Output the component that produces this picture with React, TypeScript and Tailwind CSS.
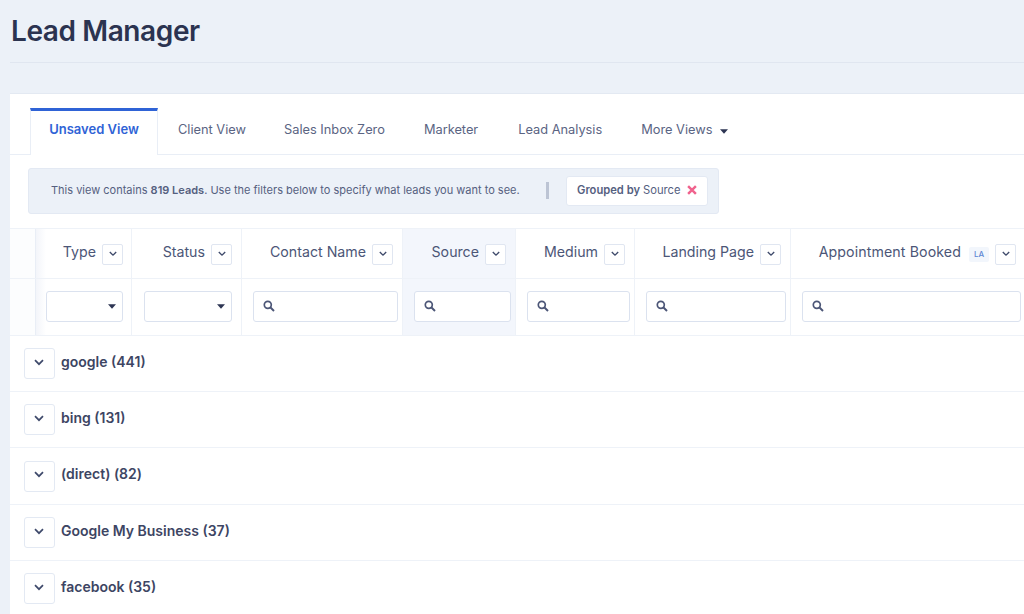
import React from "react";

const cols = [
  { w: "w-[96px]", label: "Type", kind: "select", pl: "pl-[10px]", pr: "pr-[8px]", hpr: "pr-[8px]" },
  { w: "w-[110px]", label: "Status", kind: "select", pl: "pl-[12px]", pr: "pr-[9px]", hpr: "pr-[9px]" },
  { w: "w-[161px]", label: "Contact Name", kind: "search", pl: "pl-[11px]", pr: "pr-[4px]", hpr: "pr-[9px]" },
  { w: "w-[113px]", label: "Source", kind: "search", pl: "pl-[11px]", pr: "pr-[4px]", hpr: "pr-[9px]", hi: true },
  { w: "w-[119px]", label: "Medium", kind: "search", pl: "pl-[11px]", pr: "pr-[4px]", hpr: "pr-[9px]" },
  { w: "w-[156px]", label: "Landing Page", kind: "search", pl: "pl-[11px]", pr: "pr-[4px]", hpr: "pr-[9px]" },
  { w: "w-[234px]", label: "Appointment Booked", kind: "search", pl: "pl-[11px]", pr: "pr-[3px]", hpr: "pr-[8px]", badge: true },
];

const groups = [
  { t: "google (441)", h: "h-[56px]" },
  { t: "bing (131)", h: "h-[56px]" },
  { t: "(direct) (82)", h: "h-[57px]" },
  { t: "Google My Business (37)", h: "h-[56px]" },
  { t: "facebook (35)", h: "h-[56px]" },
];

function Chevron({ size = 10 }: { size?: number }) {
  return (
    <svg width={size} height={size * 0.7} viewBox="0 0 10 7" fill="none">
      <path d="M1 1.2 L5 5.2 L9 1.2" stroke="#3f4a6b" strokeWidth="1.7" />
    </svg>
  );
}

function Search() {
  return (
    <svg width="12" height="12" viewBox="0 0 12 12" fill="none">
      <circle cx="4.8" cy="4.8" r="3.5" stroke="#4c5677" strokeWidth="1.7" />
      <path d="M7.5 7.5 L11 11" stroke="#4c5677" strokeWidth="2" />
    </svg>
  );
}

function Caret({ color = "#2d3553" }: { color?: string }) {
  return (
    <svg width="8" height="5" viewBox="0 0 8 5">
      <path d="M0 0.2 H8 L4 4.8 Z" fill={color} />
    </svg>
  );
}

export default function App() {
  return (
    <div
      className="h-[614px] w-[1024px] overflow-hidden bg-[#ecf1f8] pl-[10px] text-[#4c5677]"
      style={{ fontFamily: "Inter, 'Noto Sans', sans-serif" }}
    >
      <div className="h-[63px] border-b border-[#e0e6f0]">
        <h1 className="pl-[1px] pt-[11px] text-[28px] leading-[40px] font-semibold tracking-[-0.4px] text-[#2b3350]">
          Lead Manager
        </h1>
      </div>

      <div className="mt-[30px] h-[521px] overflow-hidden border-t border-[#e3e9f2] bg-white">
        {/* Tabs */}
        <div className="flex h-[61px] items-end border-b border-[#e9eef6] pl-[20px] text-[12.8px] text-[#5a6483]">
          <div className="relative -mb-px flex h-[47px] w-[128px] items-center justify-center border-x border-[#e9eef6] border-t-[3px] border-t-[#2f63d6] bg-white pb-[7px] text-[13px] font-semibold text-[#2f63d6]">
            Unsaved View
          </div>
          <div className="flex h-[47px] items-center pl-[20px] pb-[1px]">Client View</div>
          <div className="flex h-[47px] items-center pl-[38px] pb-[1px]">Sales Inbox Zero</div>
          <div className="flex h-[47px] items-center pl-[39px] pb-[1px]">Marketer</div>
          <div className="flex h-[47px] items-center pl-[40px] pb-[1px]">Lead Analysis</div>
          <div className="flex h-[47px] items-center gap-[8px] pl-[39px] pb-[1px]">
            More Views
            <span className="mt-[3px] flex"><Caret /></span>
          </div>
        </div>

        {/* Banner */}
        <div className="px-[18px] pt-[13px]">
          <div className="flex h-[46px] w-[691px] items-center rounded-[3px] border border-[#e3e9f3] bg-[#ecf1f8] pl-[22px] pb-[1px] text-[11px] text-[#55607f]">
            <span className="w-[495px] whitespace-nowrap">
              This view contains <b className="font-semibold">819 Leads</b>. Use the filters below to specify what leads you want to see.
            </span>
            <span className="h-[17px] w-[3px] bg-[#bcc4d4]" />
            <span className="ml-[17px] flex h-[30px] w-[142px] items-center rounded-[3px] border border-[#e3e9f3] bg-white pl-[10px] text-[11.2px]">
              <b className="font-semibold">Grouped by</b>
              <span className="ml-[3px]">Source</span>
              <svg className="ml-[7px] -mt-[2px]" width="10" height="10" viewBox="0 0 9 9">
                <path d="M1 1 L8 8 M8 1 L1 8" stroke="#f0628d" strokeWidth="2.2" />
              </svg>
            </span>
          </div>
        </div>

        {/* Table head */}
        <div className="mt-[14px] border-t border-[#eef2f8]">
          <div className="flex h-[50px] border-b border-[#eef2f8]">
            <div className="w-[26px] shrink-0 border-r border-[#e9eef6] bg-[#fcfdfe]" />
            {cols.map((c, i) => (
              <div
                key={c.label}
                className={`${c.w} ${c.hpr} relative flex shrink-0 items-center justify-end border-r border-[#eef2f8] pt-[1px] text-[14.2px] ${c.hi ? "bg-[#f3f6fc]" : ""}`}
              >
                {i === 0 && <span className="absolute inset-y-0 left-0 w-[10px] bg-gradient-to-r from-[#f3f5fa] to-white" />}
                <span className={`relative -mt-[4px] whitespace-nowrap ${c.badge ? "tracking-[0.1px]" : ""}`}>{c.label}</span>
                {c.badge && (
                  <span className="ml-[8px] flex h-[15px] w-[20px] items-center justify-center rounded-[2px] bg-[#f2f6fc] text-[8px] font-medium text-[#5f86d3]">
                    LA
                  </span>
                )}
                <span className="ml-[6px] flex h-[21px] w-[21px] items-center justify-center rounded-[2px] border border-[#e0e6f1] bg-white">
                  <Chevron size={8} />
                </span>
              </div>
            ))}
          </div>
          {/* Filter row */}
          <div className="flex h-[57px] border-b border-[#eef2f8]">
            <div className="w-[26px] shrink-0 border-r border-[#e9eef6] bg-[#fcfdfe]" />
            {cols.map((c, i) => (
              <div
                key={c.label}
                className={`${c.w} ${c.pl} ${c.pr} relative flex shrink-0 items-center border-r border-[#eef2f8] pb-[2px] ${c.hi ? "bg-[#f3f6fc]" : ""}`}
              >
                {i === 0 && <span className="absolute inset-y-0 left-0 w-[10px] bg-gradient-to-r from-[#f3f5fa] to-white" />}
                <div className={`relative flex h-[31px] w-full items-center rounded-[3px] border border-[#dbe2ef] bg-white ${c.kind === "select" ? "justify-end pr-[6px]" : "pl-[9px]"}`}>
                  {c.kind === "select" ? <Caret /> : <Search />}
                </div>
              </div>
            ))}
          </div>
        </div>

        {/* Groups */}
        {groups.map((g) => (
          <div key={g.t} className={`${g.h} flex items-center border-b border-[#eef2f8] pl-[14px]`}>
            <span className="flex h-[31px] w-[31px] items-center justify-center rounded-[3px] border border-[#e3e9f3] bg-white pb-[3px] pr-[1px]">
              <Chevron />
            </span>
            <span className="-mt-[5px] ml-[6px] text-[14px] font-semibold text-[#3d4563]">{g.t}</span>
          </div>
        ))}
      </div>
    </div>
  );
}
